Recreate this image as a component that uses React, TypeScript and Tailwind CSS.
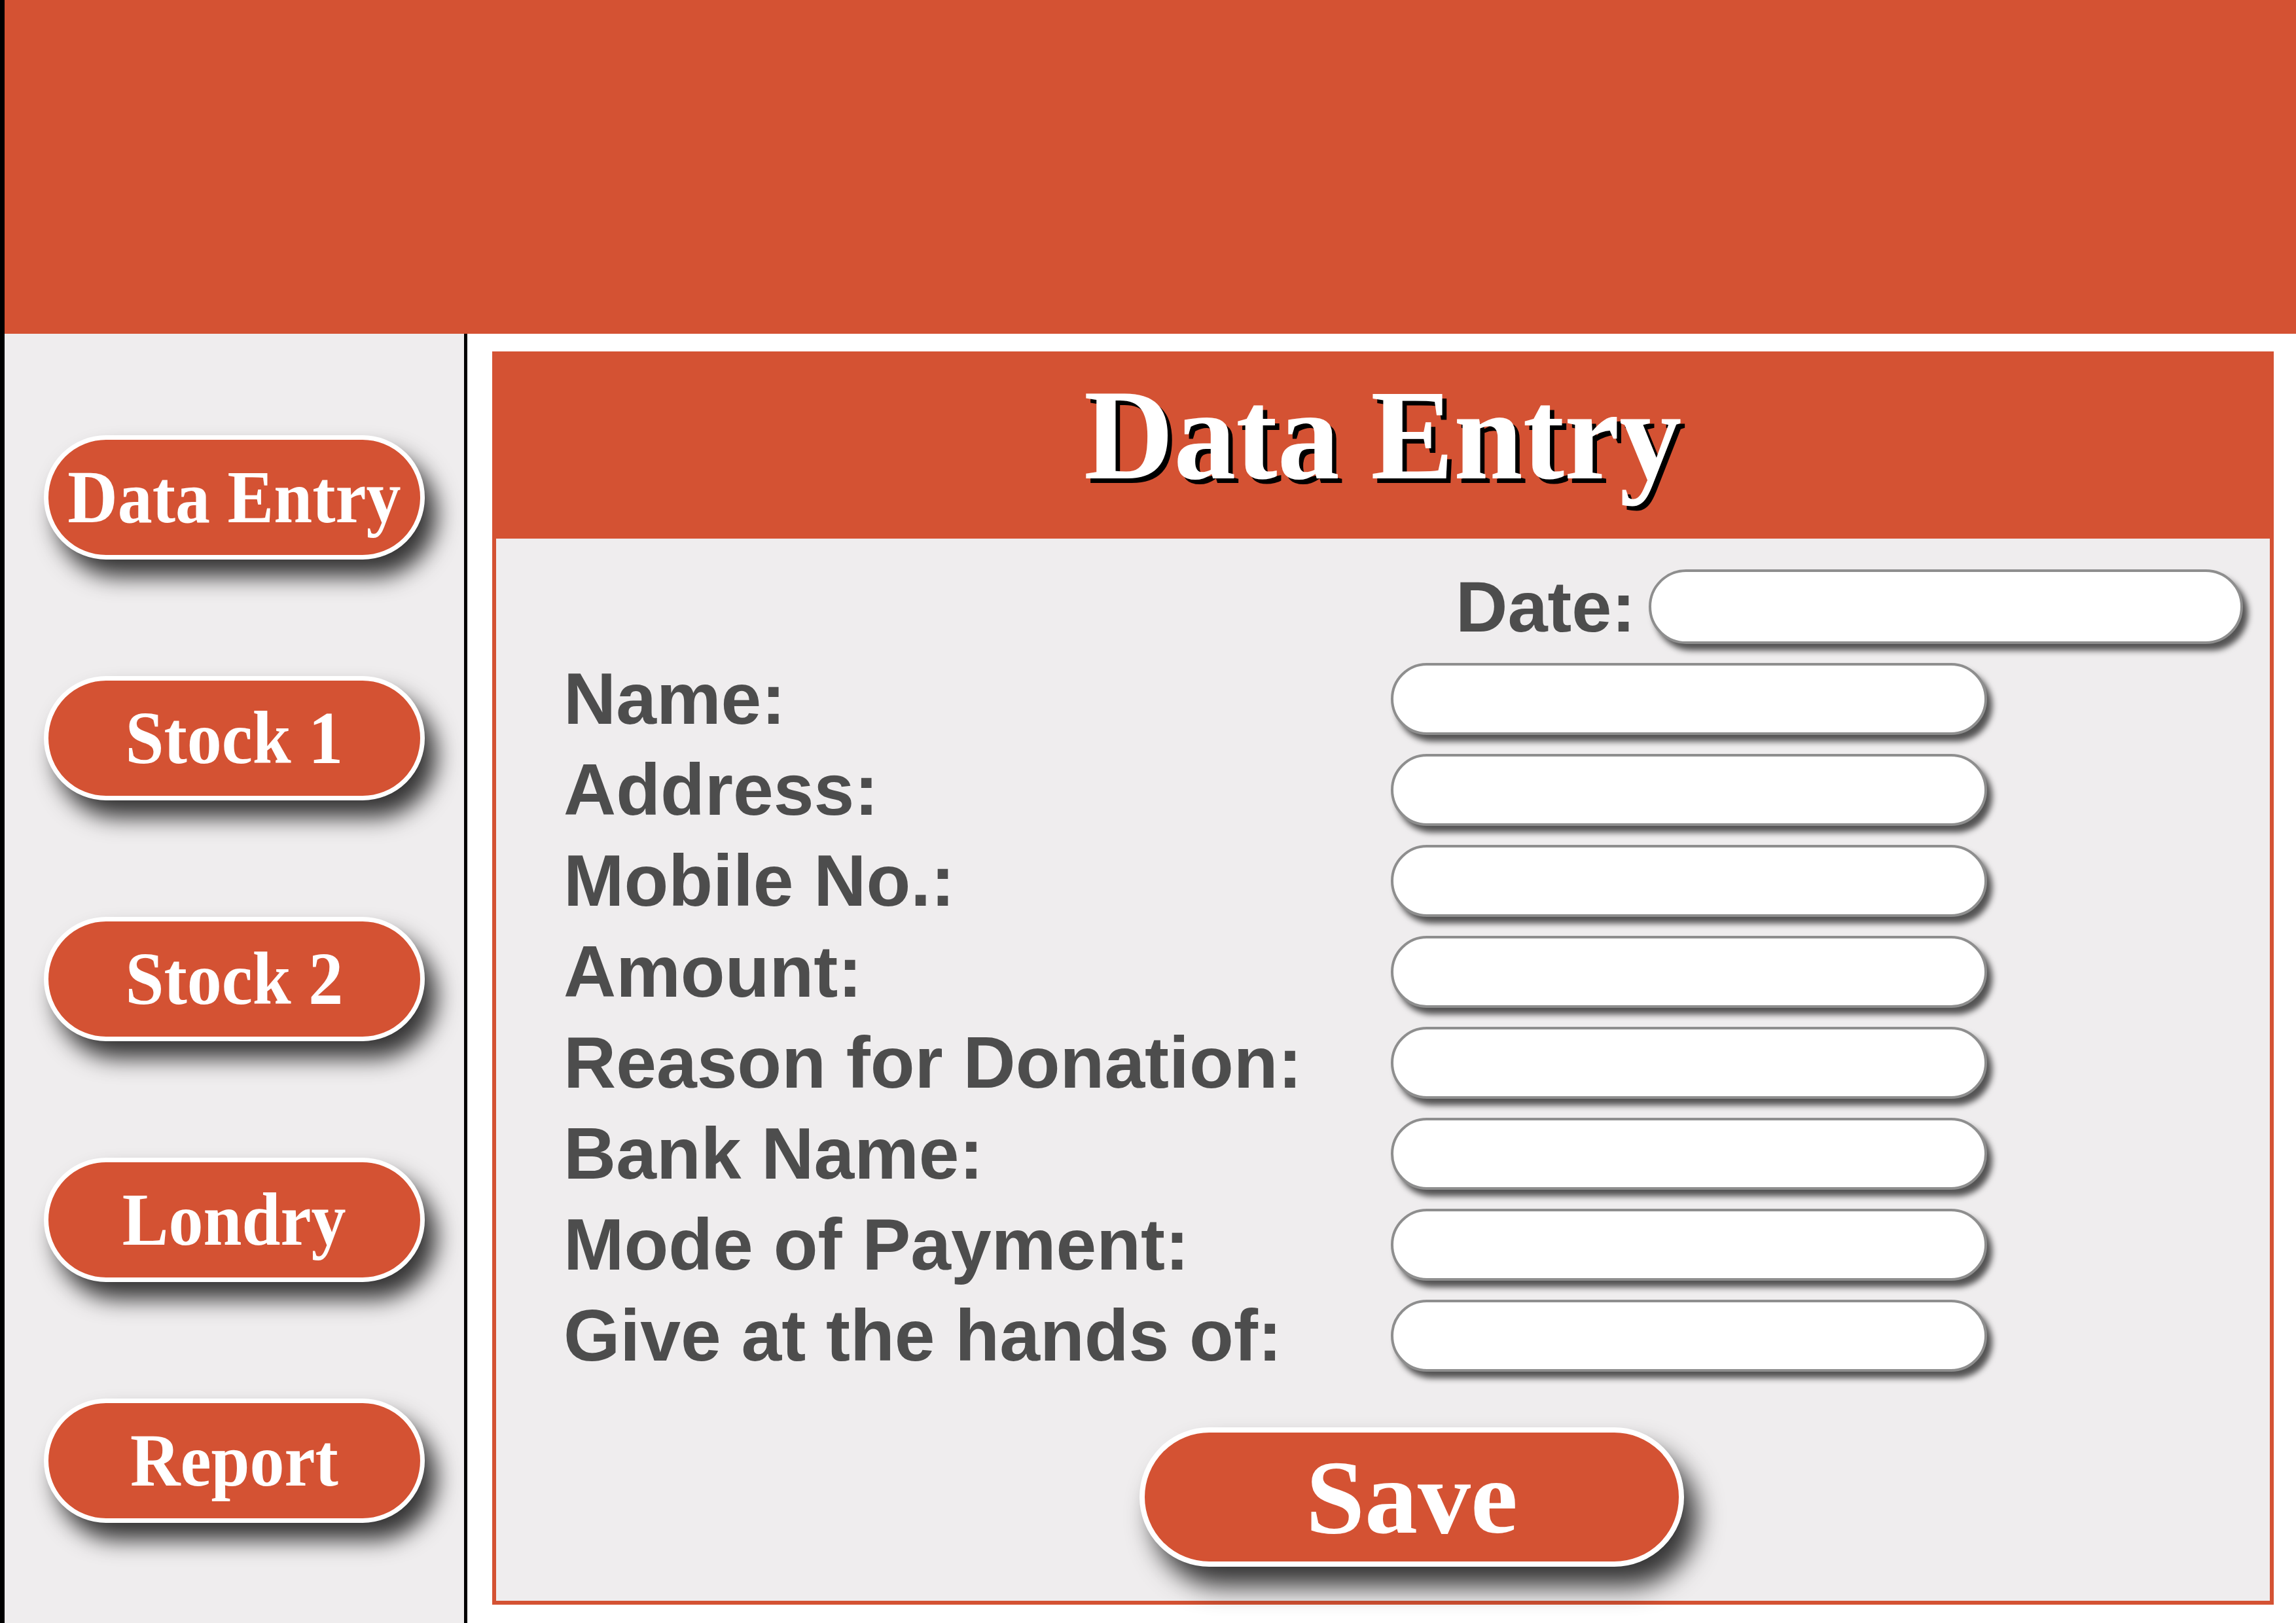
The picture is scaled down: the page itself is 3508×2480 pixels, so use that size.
const fields = [
  "Name:",
  "Address:",
  "Mobile No.:",
  "Amount:",
  "Reason for Donation:",
  "Bank Name:",
  "Mode of Payment:",
  "Give at the hands of:",
]

const menu = ["Data Entry", "Stock 1", "Stock 2", "Londry", "Report"]

function SideButton({ label }: { label: string }) {
  return (
    <button className="flex h-[190px] w-[582px] items-center justify-center rounded-full border-[7px] border-white bg-[#d45233] font-['Liberation_Serif',serif] text-[114px] font-bold leading-none text-white shadow-[18px_26px_34px_rgba(0,0,0,0.78)]">
      <span className="inline-block scale-x-[0.93] whitespace-nowrap">{label}</span>
    </button>
  )
}

function Field({ width, height }: { width: string; height: string }) {
  return <div className={`${width} ${height} rounded-full border-[4px] border-[#8e8e8e] bg-white shadow-[8px_10px_10px_rgba(0,0,0,0.65)]`} />
}

export default function App() {
  return (
    <div className="flex h-[2480px] w-[3508px] flex-col overflow-hidden border-l-[7px] border-black bg-white">
      {/* top bar */}
      <div className="h-[510px] w-full flex-none bg-[#d45233]" />

      <div className="flex flex-1">
        {/* sidebar */}
        <div className="flex w-[707px] flex-none flex-col gap-[178px] border-r-[5px] border-black bg-[#efedee] pl-[60px] pt-[155px]">
          {menu.map((m) => (
            <SideButton key={m} label={m} />
          ))}
        </div>

        {/* main */}
        <div className="flex-1 pl-[38px] pt-[27px]">
          <div className="flex w-[2722px] flex-col">
            <div className="flex h-[286px] items-center justify-center bg-[#d45233] pb-[30px]">
              <h1 className="inline-block scale-x-[0.96] font-['Liberation_Serif',serif] text-[198px] font-bold leading-none text-white [text-shadow:7px_7px_0_#000]">
                Data Entry
              </h1>
            </div>

            <div className="flex h-[1629px] flex-col border-[6px] border-t-0 border-[#d45233] bg-[#efedee] pt-[47px] font-['Liberation_Sans',Arial,sans-serif] font-bold text-[#4d4d4d]">
              <div className="flex items-center justify-end gap-[20px] pr-[41px]">
                <span className="text-[110px] leading-none">Date:</span>
                <Field width="w-[908px]" height="h-[114px]" />
              </div>

              <div className="mt-[29px] flex flex-col gap-[29px] pl-[103px]">
                {fields.map((f) => (
                  <div key={f} className="flex h-[110px] items-center">
                    <span className="w-[1264px] text-[111px] leading-none">{f}</span>
                    <Field width="w-[911px]" height="h-[110px]" />
                  </div>
                ))}
              </div>

              <div className="mt-[85px] pl-[983px]">
                <button className="flex h-[213px] w-[832px] items-center justify-center rounded-full border-[8px] border-white bg-[#d45233] font-['Liberation_Serif',serif] text-[162px] font-bold leading-none text-white shadow-[20px_30px_38px_rgba(0,0,0,0.78)]">
                  Save
                </button>
              </div>
            </div>
          </div>
        </div>
      </div>
    </div>
  )
}
